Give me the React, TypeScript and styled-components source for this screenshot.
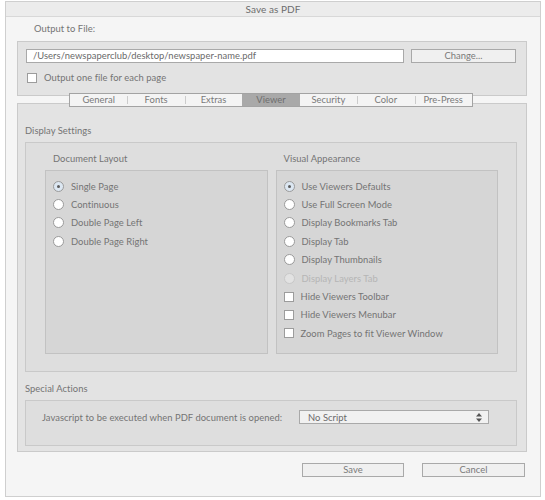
import styled, { createGlobalStyle } from "styled-components";

const GlobalStyle = createGlobalStyle`
  html, body {
    margin: 0;
    padding: 0;
    background: #ffffff;
  }
  body {
    width: 545px;
    height: 500px;
    overflow: hidden;
    font-family: Lato, "Liberation Sans", sans-serif;
    font-size: 9.4px;
    font-weight: 400;
    letter-spacing: 0.05px;
    color: #747474;
  }
`;

const Window = styled.div`
  box-sizing: border-box;
  width: 536px;
  height: 496px;
  margin: 1px 0 0 5px;
  border: 1px solid #cfcfcf;
  background: #f5f5f5;
  display: flex;
  flex-direction: column;
`;

const TitleBar = styled.div`
  height: 14px;
  line-height: 14px;
  background: #ececec;
  border-bottom: 1px solid #d8d8d8;
  text-align: center;
  font-size: 10px;
  color: #6c6c6c;
`;

const Body = styled.div`
  padding: 0 13px 0 11px;
  display: flex;
  flex-direction: column;
`;

const Caption = styled.div<{ $indent?: number; $top?: number }>`
  line-height: 12px;
  height: 12px;
  padding-left: ${(p) => p.$indent ?? 0}px;
  margin-top: ${(p) => p.$top ?? 0}px;
  white-space: nowrap;
`;

const TopPanel = styled.div`
  box-sizing: border-box;
  height: 55px;
  margin-top: 6px;
  background: #e3e3e3;
  border: 1px solid #cacaca;
  padding: 7px 10px 0 8px;
`;

const Row = styled.div<{ $gap?: number }>`
  display: flex;
  align-items: center;
  gap: ${(p) => p.$gap ?? 0}px;
`;

const PathInput = styled.div`
  box-sizing: border-box;
  width: 378px;
  height: 14px;
  line-height: 12px;
  background: #ffffff;
  border: 1px solid #a9a9a9;
  padding-left: 6px;
  color: #6a6a6a;
`;

const Button = styled.div<{ $width?: number }>`
  box-sizing: border-box;
  width: ${(p) => (p.$width ? `${p.$width}px` : "auto")};
  flex: ${(p) => (p.$width ? "none" : "1")};
  height: 14px;
  line-height: 12px;
  background: #f0f0f0;
  border: 1px solid #a9a9a9;
  text-align: center;
  color: #7a7a7a;
`;

const CheckRow = styled(Row)`
  margin-top: 9px;
  padding-left: 1px;
  gap: 7px;
`;

const Checkbox = styled.span`
  box-sizing: border-box;
  width: 10px;
  height: 10px;
  background: #ffffff;
  border: 1px solid #9c9c9c;
  flex: none;
`;

const TabBar = styled.div`
  position: relative;
  z-index: 1;
  box-sizing: border-box;
  display: flex;
  width: 404px;
  height: 14px;
  margin: -3px 0 0 52px;
  background: #f4f4f4;
  border: 1px solid #a3a3a3;
`;

const Tab = styled.div<{ $active?: boolean; $first?: boolean }>`
  position: relative;
  flex: 1;
  line-height: 12px;
  text-align: center;
  background: ${(p) => (p.$active ? "#a9a9a9" : "transparent")};
  color: ${(p) => (p.$active ? "#6e6e6e" : "#7a7a7a")};
  &::before {
    content: "";
    display: ${(p) => (p.$first ? "none" : "block")};
    position: absolute;
    left: 0;
    top: 2px;
    height: 8px;
    width: 1px;
    background: #cccccc;
  }
`;

const MainPanel = styled.div`
  box-sizing: border-box;
  height: 349px;
  margin-top: -4px;
  background: #e3e3e3;
  border: 1px solid #cacaca;
  padding: 21px 9px 5px 7px;
  display: flex;
  flex-direction: column;
`;

const GroupBox = styled.div<{ $height: number }>`
  box-sizing: border-box;
  height: ${(p) => p.$height}px;
  margin-top: 5px;
  background: #dedede;
  border: 1px solid #c9c9c9;
`;

const Columns = styled.div`
  display: flex;
  gap: 8px;
  padding: 10px 18px 0 19px;
`;

const Column = styled.div`
  flex: 1;
  display: flex;
  flex-direction: column;
`;

const OptionBox = styled.div`
  box-sizing: border-box;
  height: 184px;
  margin-top: 5px;
  background: #d6d6d6;
  border: 1px solid #c2c2c2;
  padding: 6px 0 0 7px;
`;

const Option = styled.div<{ $disabled?: boolean }>`
  display: flex;
  align-items: center;
  gap: 7px;
  height: 18.4px;
  white-space: nowrap;
  color: ${(p) => (p.$disabled ? "#b5b5b5" : "#747474")};
`;

const Radio = styled.span<{ $checked?: boolean; $disabled?: boolean }>`
  box-sizing: border-box;
  position: relative;
  width: 11px;
  height: 11px;
  border-radius: 50%;
  flex: none;
  border: 1px solid ${(p) => (p.$disabled ? "#c8c8c8" : "#9a9a9a")};
  background: ${(p) =>
    p.$checked ? "#dce7f2" : p.$disabled ? "#e2e2e2" : "#ffffff"};
  &::after {
    content: "";
    display: ${(p) => (p.$checked ? "block" : "none")};
    position: absolute;
    left: 3px;
    top: 3px;
    width: 3px;
    height: 3px;
    border-radius: 50%;
    background: #5c5c5c;
  }
`;

const SpecialRow = styled(Row)`
  padding: 9px 0 0 16px;
  gap: 0;
`;

const SelectLabel = styled.span`
  width: 257px;
  white-space: nowrap;
`;

const Select = styled.div`
  box-sizing: border-box;
  width: 190px;
  height: 14px;
  background: #f1f1f1;
  border: 1px solid #a9a9a9;
  display: flex;
  align-items: center;
  justify-content: space-between;
  padding: 0 6px 0 8px;
  color: #6a6a6a;
`;

const Footer = styled.div`
  display: flex;
  gap: 18px;
  padding: 11px 2px 0 285px;
`;

const layoutOptions = ["Single Page", "Continuous", "Double Page Left", "Double Page Right"];

const appearanceOptions = [
  { label: "Use Viewers Defaults", kind: "radio", checked: true },
  { label: "Use Full Screen Mode", kind: "radio" },
  { label: "Display Bookmarks Tab", kind: "radio" },
  { label: "Display Tab", kind: "radio" },
  { label: "Display Thumbnails", kind: "radio" },
  { label: "Display Layers Tab", kind: "radio", disabled: true },
  { label: "Hide Viewers Toolbar", kind: "check" },
  { label: "Hide Viewers Menubar", kind: "check" },
  { label: "Zoom Pages to fit Viewer Window", kind: "check" },
];

const tabs = ["General", "Fonts", "Extras", "Viewer", "Security", "Color", "Pre-Press"];

export default function App() {
  return (
    <>
      <GlobalStyle />
      <Window>
        <TitleBar>Save as PDF</TitleBar>
        <Body>
          <Caption $indent={17} $top={6}>Output to File:</Caption>
          <TopPanel>
            <Row $gap={7}>
              <PathInput>/Users/newspaperclub/desktop/newspaper-name.pdf</PathInput>
              <Button>Change...</Button>
            </Row>
            <CheckRow>
              <Checkbox />
              <span>Output one file for each page</span>
            </CheckRow>
          </TopPanel>

          <TabBar>
            {tabs.map((t, i) => (
              <Tab key={t} $active={t === "Viewer"} $first={i === 0 || t === "Viewer" || tabs[i - 1] === "Viewer"}>
                {t}
              </Tab>
            ))}
          </TabBar>

          <MainPanel>
            <Caption>Display Settings</Caption>
            <GroupBox $height={231}>
              <Columns>
                <Column>
                  <Caption $indent={8}>Document Layout</Caption>
                  <OptionBox>
                    {layoutOptions.map((o, i) => (
                      <Option key={o}>
                        <Radio $checked={i === 0} />
                        <span>{o}</span>
                      </Option>
                    ))}
                  </OptionBox>
                </Column>
                <Column>
                  <Caption $indent={8}>Visual Appearance</Caption>
                  <OptionBox>
                    {appearanceOptions.map((o) => (
                      <Option key={o.label} $disabled={o.disabled}>
                        {o.kind === "radio" ? (
                          <Radio $checked={o.checked} $disabled={o.disabled} />
                        ) : (
                          <Checkbox />
                        )}
                        <span>{o.label}</span>
                      </Option>
                    ))}
                  </OptionBox>
                </Column>
              </Columns>
            </GroupBox>

            <Caption $top={11}>Special Actions</Caption>
            <GroupBox $height={46}>
              <SpecialRow>
                <SelectLabel>Javascript to be executed when PDF document is opened:</SelectLabel>
                <Select>
                  <span>No Script</span>
                  <svg width="6" height="9" viewBox="0 0 6 9">
                    <path d="M3 0 L6 3.5 L0 3.5 Z M3 9 L6 5.5 L0 5.5 Z" fill="#555" />
                  </svg>
                </Select>
              </SpecialRow>
            </GroupBox>
          </MainPanel>

          <Footer>
            <Button $width={102}>Save</Button>
            <Button $width={103}>Cancel</Button>
          </Footer>
        </Body>
      </Window>
    </>
  );
}
